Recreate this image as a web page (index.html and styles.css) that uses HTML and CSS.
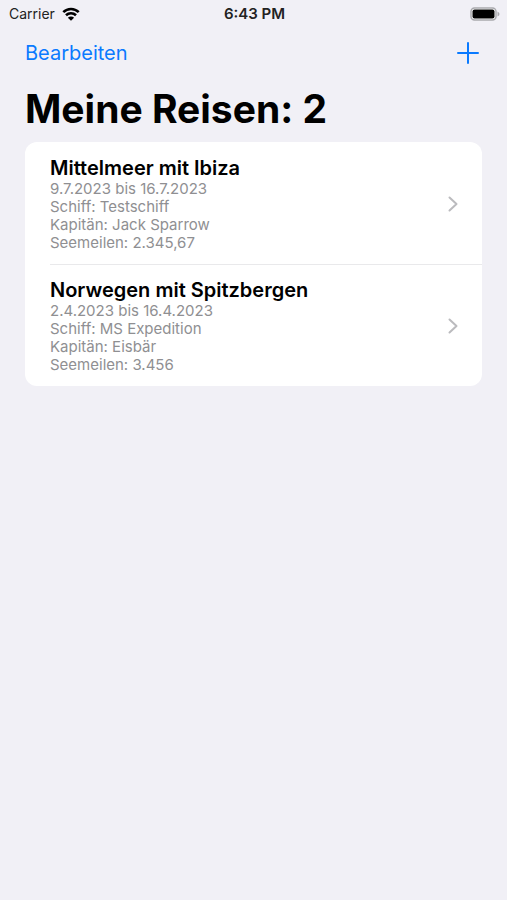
FILE: index.html
```html
<!DOCTYPE html>
<html lang="de">
<head>
<meta charset="utf-8">
<meta name="viewport" content="width=device-width, initial-scale=1">
<title>Meine Reisen</title>
<link rel="stylesheet" href="styles.css">
</head>
<body>
<header class="status">
  <div class="carrier">
    <span>Carrier</span>
    <svg class="wifi" viewBox="0 0 18 14" aria-hidden="true">
      <path class="arc" d="M1.3 5.1a11 11 0 0 1 15.4 0M4 8.2a7.2 7.2 0 0 1 10 0"/>
      <path d="M9 13.8 5.9 10.7a4.4 4.4 0 0 1 6.2 0z"/>
    </svg>
  </div>
  <time class="clock">6:43 PM</time>
  <svg class="battery" viewBox="0 0 30 14" aria-hidden="true">
    <rect class="case" x="1" y="1" width="25" height="12" rx="3.5"/>
    <rect x="2.5" y="2.5" width="22" height="9" rx="2"/>
    <path class="tip" d="M27.5 4.5q2 1 2 2.5t-2 2.5z"/>
  </svg>
</header>
<nav class="toolbar">
  <button class="edit" type="button">Bearbeiten</button>
  <button class="add" type="button" aria-label="Reise hinzufügen">
    <svg viewBox="0 0 22 22" aria-hidden="true"><path d="M11 1v20M1 11h20"/></svg>
  </button>
</nav>
<main>
  <h1>Meine Reisen: 2</h1>
  <ul class="trips">
    <li>
      <a class="trip" href="#mittelmeer">
        <div class="details">
          <h2>Mittelmeer mit Ibiza</h2>
          <p>9.7.2023 bis 16.7.2023</p>
          <p>Schiff: Testschiff</p>
          <p>Kapitän: Jack Sparrow</p>
          <p>Seemeilen: 2.345,67</p>
        </div>
        <svg class="chevron" viewBox="0 0 10 16" aria-hidden="true"><path d="m1.5 1.5 7 6.5-7 6.5"/></svg>
      </a>
    </li>
    <li>
      <a class="trip" href="#norwegen">
        <div class="details">
          <h2>Norwegen mit Spitzbergen</h2>
          <p>2.4.2023 bis 16.4.2023</p>
          <p>Schiff: MS Expedition</p>
          <p>Kapitän: Eisbär</p>
          <p>Seemeilen: 3.456</p>
        </div>
        <svg class="chevron" viewBox="0 0 10 16" aria-hidden="true"><path d="m1.5 1.5 7 6.5-7 6.5"/></svg>
      </a>
    </li>
  </ul>
</main>
</body>
</html>
```
FILE: styles.css
```css
* { box-sizing: border-box; }

body {
  margin: 0;
  min-height: 100vh;
  background: #f1f0f6;
  color: #000;
  font-family: Inter, "Liberation Sans", sans-serif;
}

h1, h2, p, ul { margin: 0; padding: 0; }

.status {
  display: grid;
  grid-template-columns: 1fr auto 1fr;
  align-items: center;
  height: 27px;
  padding: 0 7px 0 9px;
  font-size: 14px;
  color: #222;
}

.carrier { display: flex; align-items: center; gap: 7px; }
.wifi { width: 18px; height: 14px; }
.arc { fill: none; stroke: #000; stroke-width: 2.6; }
.clock { font-size: 15px; font-weight: 600; }
.battery { width: 30px; height: 14px; justify-self: end; }
.case { fill: #fff; stroke: #a9a9ad; stroke-width: 1.5; }
.tip { fill: #a9a9ad; }

.toolbar {
  display: flex;
  align-items: center;
  justify-content: space-between;
  height: 52px;
  padding: 0 28px 0 25px;
}

.toolbar button {
  padding: 0;
  border: 0;
  background: none;
  color: #0a7aff;
  font: inherit;
  cursor: pointer;
}

.toolbar .edit { font-size: 20px; }
.add svg { display: block; width: 22px; height: 22px; }
.add path { fill: none; stroke: currentColor; stroke-width: 2; stroke-linecap: round; }

main { padding: 4px 25px 24px; }
h1 { font-size: 39px; line-height: 52px; font-weight: 700; }

.trips {
  margin-top: 7px;
  border-radius: 12px;
  background: #fff;
  list-style: none;
}

.trips li { padding-left: 25px; }

.trip {
  display: flex;
  align-items: center;
  justify-content: space-between;
  padding: 14px 24px 12px 0;
  color: inherit;
  text-decoration: none;
}

.trips li + li .trip { padding-top: 13px; border-top: 1px solid #e9e9eb; }

h2 { font-size: 20px; line-height: 24px; font-weight: 600; }
.details p { color: #8f8f92; font-size: 15px; line-height: 18px; }
.chevron { width: 10px; height: 16px; flex: none; }
.chevron path { fill: none; stroke: #bbbbbe; stroke-width: 2; stroke-linecap: round; stroke-linejoin: round; }
```
